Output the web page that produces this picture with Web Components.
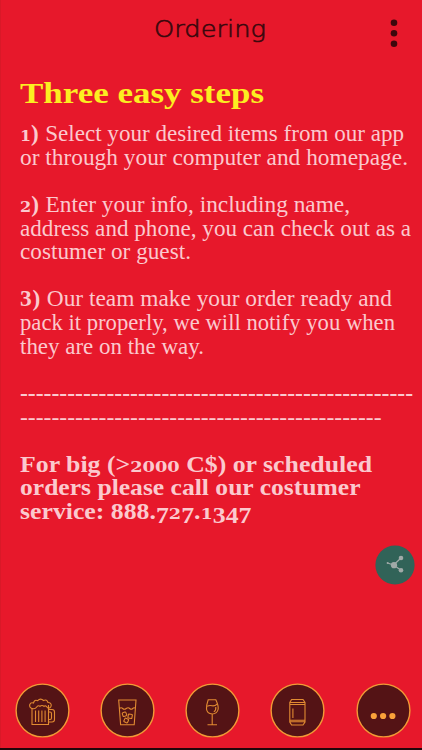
<!DOCTYPE html>
<html lang="en">
<head>
<meta charset="utf-8">
<title>Ordering</title>
<style>
  body { margin: 0; background: #e7182b; }
</style>
</head>
<body>
<order-screen>
  <app-header slot="header">Ordering</app-header>
  <fit-line slot="title" width="244" size="30" height="34" base="27" bold>Three easy steps</fit-line>
  <fit-line width="384"><b><small>1</small>)</b> Select your desired items from our app</fit-line>
  <fit-line width="388">or through your computer and homepage.</fit-line>
  <fit-line></fit-line>
  <fit-line width="330"><b><small>2</small>)</b> Enter your info, including name,</fit-line>
  <fit-line width="391">address and phone, you can check out as a</fit-line>
  <fit-line width="171">costumer or guest.</fit-line>
  <fit-line></fit-line>
  <fit-line width="372"><b>3)</b> Our team make your order ready and</fit-line>
  <fit-line width="375">pack it properly, we will notify you when</fit-line>
  <fit-line width="184">they are on the way.</fit-line>
  <fit-line></fit-line>
  <fit-line width="393" bold>--------------------------------------------------</fit-line>
  <fit-line width="361.5">----------------------------------------------</fit-line>
  <fit-line></fit-line>
  <fit-line width="352" bold>For big (&gt;<small>2000</small> C$) or scheduled</fit-line>
  <fit-line width="340.5" bold>orders please call our costumer</fit-line>
  <fit-line width="231.5" bold>service: 888.<i>7</i><small>2</small><i>7</i>.<small>1</small><i>347</i></fit-line>
  <share-button slot="share"></share-button>
  <nav-bar slot="nav">
    <nav-item icon="beer"></nav-item>
    <nav-item icon="glass"></nav-item>
    <nav-item icon="wine"></nav-item>
    <nav-item icon="can"></nav-item>
    <nav-item icon="more"></nav-item>
  </nav-bar>
</order-screen>

<script>
// Base class: clones the template of the component into its shadow root
class BaseElement extends HTMLElement {
  constructor() {
    super();
    this.attachShadow({ mode: "open" });
  }

  connectedCallback() {
    const template = document.createElement("template");
    template.innerHTML = this.getStyles() + this.getTemplate();
    this.shadowRoot.replaceChildren(template.content.cloneNode(true));
  }
}

class OrderScreen extends BaseElement {
  getTemplate() {
    return `
      <slot name="header"></slot>
      <main>
        <div class="title"><slot name="title"></slot></div>
        <slot></slot>
      </main>
      <slot name="share"></slot>
      <slot name="nav"></slot>
    `;
  }

  getStyles() {
    return `
      <style>
        :host {
          display: flex;
          flex-direction: column;
          box-sizing: border-box;
          width: 422px;
          height: 750px;
          overflow: hidden;
          position: relative;
          background: #e7182b;
          box-shadow: inset 1px 0 #d91928;
          border-bottom: 2px solid #22060a;
        }
        main { padding: 12px 0 0 19.5px; flex: 1; }
        .title { margin-bottom: 12px; }
      </style>
    `;
  }
}

class AppHeader extends BaseElement {
  getTemplate() {
    return `
      <svg class="name" width="116" height="32">
        <text x="2" y="18.8" textLength="112" lengthAdjust="spacingAndGlyphs">${this.textContent.trim()}</text>
      </svg>
      <svg class="menu" width="12" height="32" fill="#3d080d">
        <circle cx="6" cy="4.8" r="3.3"/><circle cx="6" cy="15.3" r="3.3"/><circle cx="6" cy="25.8" r="3.3"/>
      </svg>
    `;
  }

  getStyles() {
    return `
      <style>
        :host {
          display: grid;
          grid-template-columns: 1fr 116px 1fr;
          height: 64px;
          padding: 18px 22px 0 20px;
          box-sizing: border-box;
        }
        .name { grid-column: 2; overflow: visible; }
        .menu { justify-self: end; }
        text {
          font: 200 23.5px "DejaVu Sans", sans-serif;
          fill: #3a080d;
          stroke: #3a080d;
          stroke-width: .6px;
        }
      </style>
    `;
  }
}

// One line of serif text set to a given measure.
// <small> is a low old-style figure, <i> a descending one.
class FitLine extends BaseElement {
  spans(node) {
    return [...node.childNodes].map((child) => {
      if (child.nodeType === Node.TEXT_NODE) {
        return child.data.replace(/&/g, "&amp;").replace(/</g, "&lt;").replace(/>/g, "&gt;");
      }
      const inner = this.spans(child);
      return `<tspan class="${child.localName}">${inner}</tspan>`;
    }).join("");
  }

  getTemplate() {
    const width = this.getAttribute("width");
    if (!width) return "";
    const base = this.getAttribute("base") || 18.7;
    return `
      <svg width="400" height="100%">
        <text y="${base}" textLength="${width}" lengthAdjust="spacingAndGlyphs">${this.spans(this)}</text>
      </svg>
    `;
  }

  getStyles() {
    const size = this.getAttribute("size") || 22.5;
    const height = this.getAttribute("height") || 23.63;
    const title = this.slot === "title";
    return `
      <style>
        :host { display: block; height: ${height}px; }
        svg { display: block; overflow: visible; }
        text {
          font: ${this.hasAttribute("bold") ? 700 : 400} ${size}px "Liberation Serif", serif;
          fill: ${title ? "#fcee21" : "#fbc9ce"};
        }
        .b { font-weight: 700; letter-spacing: .7px; }
        .small { font-family: "DejaVu Serif", serif; font-size: 15.5px; letter-spacing: 0; }
        .i { font-size: 22.5px; baseline-shift: -3.5px; letter-spacing: 0; }
      </style>
    `;
  }
}

class ShareButton extends BaseElement {
  getTemplate() {
    return `
      <svg width="40" height="40" viewBox="0 0 40 40">
        <circle cx="20" cy="20" r="19.6" fill="#316358"/>
        <g stroke="#a0aaa8" stroke-width="1.2" fill="#a0aaa8">
          <path d="M12.6 18L18.6 20L26 13M18.6 20L26 25.2" fill="none"/>
          <circle cx="12.6" cy="18" r="1" stroke="none"/>
          <circle cx="19" cy="20.2" r="3.1" stroke="none"/>
          <circle cx="26" cy="13" r="2.3" stroke="none"/>
          <circle cx="26" cy="25.2" r="2.3" stroke="none"/>
        </g>
      </svg>
    `;
  }

  getStyles() {
    return `
      <style>
        :host { display: block; position: absolute; right: 7px; top: 545px; width: 40px; height: 40px; }
        svg { display: block; }
      </style>
    `;
  }
}

class NavBar extends BaseElement {
  getTemplate() {
    return `<slot></slot>`;
  }

  getStyles() {
    return `
      <style>
        :host {
          display: flex;
          justify-content: space-between;
          padding: 0 11.5px 10px 14.5px;
        }
      </style>
    `;
  }
}

// Drawings on a 55x55 grid, one per drink
const icons = {
  beer: `
    <path d="M17 25V41.5H33.5V22M33.5 26.5H37Q39.5 26.5 39.5 29V36.5Q39.5 39 37 39H33.5M33.5 29H35Q36.5 29 36.5 30.5V35Q36.5 36.5 35 36.5H33.5"/>
    <path d="M17 25.5Q14 24.5 14.8 21.5Q15.7 19 18.5 20Q19.5 16.2 22.7 17.7Q25.5 14.7 28.5 17.5Q32 16 33 19.5Q36.5 19.5 36.2 22.7Q35.6 26 32.5 24.7Q31 22 29 23.3Q27 21.8 25 23.3Q23.3 22 21.7 24Q20 26.5 17 25.5"/>
    <path d="M20.5 27.5V39M23.7 27.5V39M26.9 27.5V39M30.1 27.5V39"/>`,
  glass: `
    <path d="M18.7 17H36L34.2 41.7H20.6ZM19.4 25.5Q21.2 24 22.7 25.5T26.2 25.5T29.7 25.5T32.7 25.5T35.5 25.5"/>
    <rect x="22.7" y="29.2" width="3.8" height="3.8" rx=".8" transform="rotate(-20 25 31.5)"/>
    <rect x="28" y="31.2" width="4" height="4" rx=".5" transform="rotate(10 30 34)"/>
    <rect x="24" y="35.5" width="4" height="4" rx=".8" transform="rotate(25 26 38)"/>`,
  wine: `
    <path d="M23.2 16.8H30.8Q33.5 22.3 33.2 26Q32.3 30.7 27.2 31Q22 30.7 21.5 26Q21.3 22.3 23.2 16.8ZM27.2 31V41.8M22.5 41.8H32"/>
    <path d="M22.2 23.3Q24.7 22 27.1 22.8Q29.8 23.3 32.3 20.8M30.8 24Q31.2 27.5 28.8 28.8"/>`,
  can: `
    <path d="M21.6 16.5H33L35 19.5V39L33 42H21.6L19.8 39V19.5ZM19.8 19.5H35M20 21.5H34.7M20 37.2H34.7M19.8 38.8H35"/>
    <path d="M22.9 25.5V35"/>`,
  more: `
    <g fill="#faa23a" stroke="none"><circle cx="17.8" cy="33" r="3.1"/><circle cx="27.1" cy="33" r="3.1"/><circle cx="36.4" cy="33" r="3.1"/></g>`
};

class NavItem extends BaseElement {
  getTemplate() {
    return `
      <svg width="55" height="55" viewBox="0 0 55 55" fill="none" stroke="#e18b32" stroke-width="1.1">
        <circle cx="27.5" cy="27.5" r="26.4" fill="#541315" stroke="#f29a36" stroke-width="1.4"/>
        ${icons[this.getAttribute("icon")]}
      </svg>
    `;
  }

  getStyles() {
    return `
      <style>
        :host { display: block; width: 55px; height: 55px; }
        svg { display: block; }
      </style>
    `;
  }
}

customElements.define("order-screen", OrderScreen);
customElements.define("app-header", AppHeader);
customElements.define("fit-line", FitLine);
customElements.define("share-button", ShareButton);
customElements.define("nav-bar", NavBar);
customElements.define("nav-item", NavItem);
</script>
</body>
</html>
